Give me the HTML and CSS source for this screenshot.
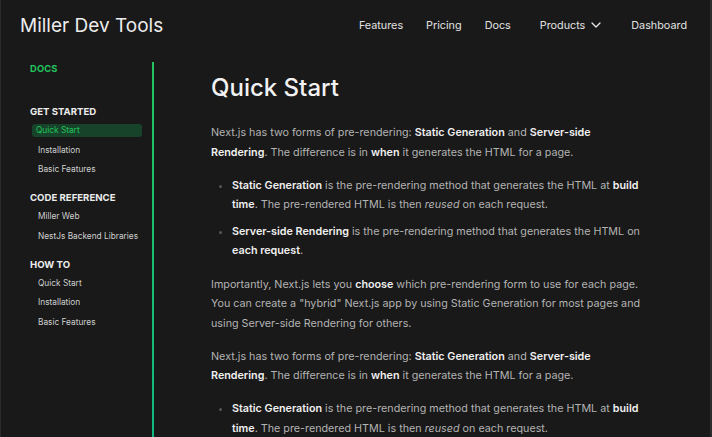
FILE: index.html
```html
<!DOCTYPE html>
<html lang="en">
<head>
<meta charset="utf-8">
<title>Miller Dev Tools</title>
<link rel="stylesheet" href="styles.css">
</head>
<body>
<div class="frame">
  <header class="topbar">
    <div class="brand">Miller Dev Tools</div>
    <nav class="nav">
      <a class="nav-link">Features</a>
      <a class="nav-link">Pricing</a>
      <a class="nav-link">Docs</a>
      <a class="nav-link products">Products
        <svg class="chev" width="10" height="6" viewBox="0 0 10 6"><path d="M1 1l4 4 4-4" fill="none" stroke="#e6e6e6" stroke-width="1.3" stroke-linecap="round" stroke-linejoin="round"/></svg>
      </a>
      <a class="nav-link">Dashboard</a>
    </nav>
  </header>
  <div class="body">
    <aside class="sidebar">
      <div class="docs-label">DOCS</div>
      <div class="group">
        <div class="group-title">GET STARTED</div>
        <a class="item active">Quick Start</a>
        <a class="item">Installation</a>
        <a class="item">Basic Features</a>
      </div>
      <div class="group">
        <div class="group-title">CODE REFERENCE</div>
        <a class="item">Miller Web</a>
        <a class="item">NestJs Backend Libraries</a>
      </div>
      <div class="group">
        <div class="group-title">HOW TO</div>
        <a class="item">Quick Start</a>
        <a class="item">Installation</a>
        <a class="item">Basic Features</a>
      </div>
    </aside>
    <main class="content">
      <h1 class="title">Quick Start</h1>
      <p>Next.js has two forms of pre-rendering: <b>Static Generation</b> and <b>Server-side Rendering</b>. The difference is in <b>when</b> it generates the HTML for a page.</p>
      <ul>
        <li><b>Static Generation</b> is the pre-rendering method that generates the HTML at <b>build time</b>. The pre-rendered HTML is then <i>reused</i> on each request.</li>
        <li><b>Server-side Rendering</b> is the pre-rendering method that generates the HTML on <b>each request</b>.</li>
      </ul>
      <p>Importantly, Next.js lets you <b>choose</b> which pre-rendering form to use for each page. You can create a "hybrid" Next.js app by using Static Generation for most pages and using Server-side Rendering for others.</p>
      <p>Next.js has two forms of pre-rendering: <b>Static Generation</b> and <b>Server-side Rendering</b>. The difference is in <b>when</b> it generates the HTML for a page.</p>
      <ul>
        <li><b>Static Generation</b> is the pre-rendering method that generates the HTML at <b>build time</b>. The pre-rendered HTML is then <i>reused</i> on each request.</li>
        <li><b>Server-side Rendering</b> is the pre-rendering method that generates the HTML on <b>each request</b>.</li>
      </ul>
    </main>
  </div>
</div>
</body>
</html>
```
FILE: styles.css
```css
* { box-sizing: border-box; }
html, body { margin: 0; padding: 0; height: 100%; overflow: hidden; }
body {
  background: #191919;
  font-family: Inter, "Noto Sans", sans-serif;
  color: #e8e8e8;
}
.frame {
  height: 100%;
  border-left: 1px solid #2c2c2c;
  border-right: 2px solid #2c2c2c;
  display: flex;
  flex-direction: column;
}
.topbar {
  height: 50px;
  flex: none;
  display: flex;
  align-items: center;
  justify-content: space-between;
  padding: 0 23px 0 19px;
}
.brand {
  font-size: 19px;
  font-weight: 400;
  color: #ececec;
}
.nav {
  display: flex;
  align-items: center;
}
.nav-link {
  font-size: 10.8px;
  color: #e2e2e2;
  margin-left: 23px;
  display: flex;
  align-items: center;
}
.nav-link.products { margin-left: 29px; margin-right: 7px; }
.chev { margin-left: 6px; }
.body {
  flex: 1;
  display: flex;
  min-height: 0;
}
.sidebar {
  width: 153px;
  flex: none;
  margin-top: 12px;
  padding: 0 10px 0 29px;
  border-right: 2px solid;
  border-image: linear-gradient(#22c55e, #10b981) 1;
}
.docs-label {
  color: #22c55e;
  font-size: 9.3px;
  font-weight: 700;
  letter-spacing: 0.2px;
  line-height: 13px;
  margin-bottom: 30px;
}
.group { margin-bottom: 15px; }
.group-title {
  font-size: 9.6px;
  font-weight: 700;
  color: #ececec;
  line-height: 13px;
  margin-bottom: 6px;
}
.item {
  display: block;
  font-size: 8.3px;
  color: #cfcfcf;
  line-height: 13px;
  padding: 0 0 0 6px;
  margin: 0 0 6.5px 2px;
  border-radius: 3px;
  white-space: nowrap;
}
.item.active {
  background: #17432a;
  color: #22c55e;
  padding-left: 4px;
}
.content {
  flex: 1;
  padding: 0 64px 0 57px;
  font-size: 10.75px;
  line-height: 19.5px;
  color: #b3b3b3;
}
.title {
  font-size: 24px;
  font-weight: 500;
  color: #f2f2f2;
  margin: 22px 0 19px;
  line-height: 32px;
}
.content p { margin: 0 0 13.5px; }
.content b { color: #f0f0f0; font-weight: 600; }
.content ul {
  margin: 0 0 14px;
  padding-left: 21px;
}
.content li { margin-bottom: 7px; }
.content li::marker { color: #555; }
```
